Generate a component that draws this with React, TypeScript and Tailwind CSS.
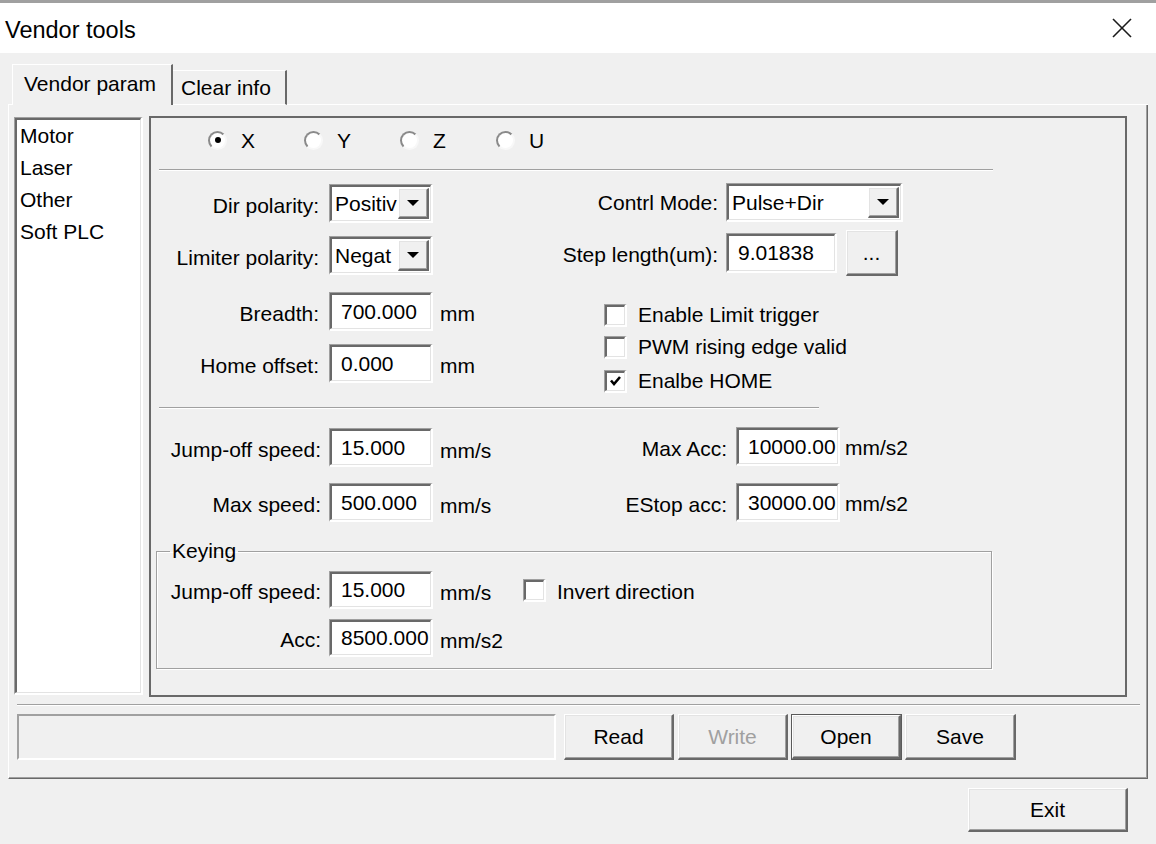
import React from "react";

const sunkenOuter =
  "border-t border-l border-b-2 border-r-2 border-t-[#a0a0a0] border-l-[#a0a0a0] border-b-white border-r-white";
const sunkenInner =
  "border-t-2 border-l-2 border-b border-r border-t-[#696969] border-l-[#696969] border-b-[#e3e3e3] border-r-[#e3e3e3]";
const raisedOuter =
  "border-t border-l border-b-2 border-r-2 border-t-white border-l-white border-b-[#696969] border-r-[#696969]";
const raisedInner =
  "border-t border-l border-b border-r border-t-[#e3e3e3] border-l-[#e3e3e3] border-b-[#a0a0a0] border-r-[#a0a0a0]";

function Edit({ value, className }: { value: string; className: string }) {
  return (
    <div className={`${sunkenOuter} ${className} shrink-0`}>
      <div className={`${sunkenInner} h-full bg-white flex items-center pl-[9px] overflow-hidden whitespace-nowrap`}>
        {value}
      </div>
    </div>
  );
}

function Arrow() {
  return (
    <svg width="12" height="6" viewBox="0 0 12 6">
      <polygon points="0,0 12,0 6,6" fill="#000" />
    </svg>
  );
}

function Combo({ value, className }: { value: string; className: string }) {
  return (
    <div className={`${sunkenOuter} ${className} shrink-0`}>
      <div className={`${sunkenInner} h-full bg-white flex items-stretch overflow-hidden`}>
        <div className="flex-1 flex items-center pl-[3px] overflow-hidden whitespace-nowrap">{value}</div>
        <div className={`${raisedOuter} w-[31px] my-[1px] mr-[1px] bg-[#f0f0f0] shrink-0`}>
          <div className={`${raisedInner} h-full flex items-center justify-center`}>
            <Arrow />
          </div>
        </div>
      </div>
    </div>
  );
}

function Button({
  label,
  className,
  disabled,
  isDefault,
}: {
  label: string;
  className: string;
  disabled?: boolean;
  isDefault?: boolean;
}) {
  const inner = (
    <div className={`${raisedOuter} h-full bg-[#f0f0f0]`}>
      <div
        className={`${raisedInner} h-full flex items-center justify-center ${
          disabled ? "text-[#a0a0a0]" : "text-black"
        }`}
      >
        {label}
      </div>
    </div>
  );
  if (isDefault) {
    return <div className={`border border-[#5a5a5a] ${className} shrink-0`}>{inner}</div>;
  }
  return <div className={`${className} shrink-0`}>{inner}</div>;
}

function Radio({ checked }: { checked?: boolean }) {
  return (
    <div className="w-[19px] h-[19px] rounded-full border-2 border-t-[#8a8a8a] border-l-[#8a8a8a] border-b-[#f8f8f8] border-r-[#f8f8f8] bg-white flex items-center justify-center shrink-0">
      {checked ? <div className="w-[6px] h-[6px] rounded-full bg-black" /> : null}
    </div>
  );
}

function Check({ checked }: { checked?: boolean }) {
  return (
    <div className={`${sunkenOuter} w-[23px] h-[23px] shrink-0`}>
      <div className={`${sunkenInner} h-full bg-white flex items-center justify-center`}>
        {checked ? (
          <svg width="13" height="12" viewBox="0 0 13 12">
            <polyline points="2,5.5 5,9 11,2" fill="none" stroke="#000" strokeWidth="2.6" />
          </svg>
        ) : null}
      </div>
    </div>
  );
}

export default function App() {
  return (
    <div className="w-[1156px] h-[844px] bg-[#f0f0f0] flex flex-col overflow-hidden font-['Liberation_Sans',Arial,sans-serif] text-[21px] leading-[24px] text-black">
      {/* top strip */}
      <div className="h-[3px] bg-[#a0a0a0] shrink-0" />
      {/* title bar */}
      <div className="h-[50px] bg-white flex items-center justify-between pl-[5px] pr-[24px] shrink-0">
        <span className="text-[23.5px] leading-[28px] pt-[3px]">Vendor tools</span>
        <svg width="20" height="20" viewBox="0 0 20 20">
          <line x1="1" y1="1" x2="19" y2="19" stroke="#1a1a1a" strokeWidth="1.6" />
          <line x1="19" y1="1" x2="1" y2="19" stroke="#1a1a1a" strokeWidth="1.6" />
        </svg>
      </div>

      <div className="flex flex-col px-[8px]">
        {/* tab strip */}
        <div className="flex items-end h-[41px] mt-[11px]">
          <div className="w-[4px] border-b border-b-white" />
          <div className="w-[161px] h-[41px] border-t border-l border-r-2 border-t-white border-l-white border-r-[#696969] pl-[11px] pt-[7px]">
            Vendor param
          </div>
          <div className="w-[114px] h-[35px] border-t border-r-2 border-b border-t-white border-r-[#696969] border-b-white pl-[8px] pt-[5px]">
            Clear info
          </div>
          <div className="flex-1 border-b border-b-white" />
        </div>

        {/* tab page */}
        <div className="border-l border-r border-b border-l-white border-r-[#696969] border-b-[#696969]">
          <div className="border-r border-b border-r-[#a0a0a0] border-b-[#a0a0a0] flex flex-col pb-[17px]">
            <div className="flex gap-[6px] pl-[5px] pt-[11px]">
              {/* list */}
              <div className={`${sunkenOuter} w-[129px] h-[578px] mt-[1px] shrink-0`}>
                <div className={`${sunkenInner} h-full bg-white flex flex-col pl-[3px]`}>
                  <div className="h-[32px] flex items-center">Motor</div>
                  <div className="h-[32px] flex items-center">Laser</div>
                  <div className="h-[32px] flex items-center">Other</div>
                  <div className="h-[32px] flex items-center">Soft PLC</div>
                </div>
              </div>

              {/* panel */}
              <div className="w-[978px] h-[581px] border-2 border-[#696969] flex flex-col shrink-0">
                {/* radios */}
                <div className="flex pl-[57px] mt-[9px]">
                  {[
                    ["X", true],
                    ["Y", false],
                    ["Z", false],
                    ["U", false],
                  ].map(([l, c]) => (
                    <div key={l as string} className="w-[96px] flex items-center gap-[14px]">
                      <Radio checked={c as boolean} />
                      <span className="pt-[2px]">{l as string}</span>
                    </div>
                  ))}
                </div>
                <div className="ml-[8px] w-[834px] h-[2px] border-t border-b border-t-[#a0a0a0] border-b-white mt-[16px]" />

                {/* upper section */}
                <div className="flex">
                  <div className="w-[389px] flex flex-col">
                    <div className="flex items-center mt-[13px]">
                      <div className="w-[168px] text-right pt-[4px]">Dir polarity:</div>
                      <Combo value="Positiv" className="w-[104px] h-[39px] ml-[10px]" />
                    </div>
                    <div className="flex items-center mt-[13px]">
                      <div className="w-[168px] text-right pt-[4px]">Limiter polarity:</div>
                      <Combo value="Negat" className="w-[104px] h-[39px] ml-[10px]" />
                    </div>
                    <div className="flex items-center mt-[17px]">
                      <div className="w-[168px] text-right pt-[4px]">Breadth:</div>
                      <Edit value="700.000" className="w-[104px] h-[39px] ml-[10px]" />
                      <span className="ml-[7px] pt-[4px]">mm</span>
                    </div>
                    <div className="flex items-center mt-[13px]">
                      <div className="w-[168px] text-right pt-[4px]">Home offset:</div>
                      <Edit value="0.000" className="w-[104px] h-[39px] ml-[10px]" />
                      <span className="ml-[7px] pt-[4px]">mm</span>
                    </div>
                  </div>
                  <div className="flex flex-col">
                    <div className="flex items-center mt-[12px]">
                      <div className="w-[178px] text-right">Contrl Mode:</div>
                      <Combo value="Pulse+Dir" className="w-[177px] h-[39px] ml-[8px]" />
                    </div>
                    <div className="flex items-center mt-[8px] h-[46px]">
                      <div className="w-[178px] text-right pt-[4px]">Step length(um):</div>
                      <Edit value="9.01838" className="w-[111px] h-[40px] ml-[8px]" />
                      <Button label="..." className="w-[52px] h-[46px] ml-[9px]" />
                    </div>
                    <div className="flex items-center pl-[64px] mt-[27px] gap-[11px]">
                      <Check />
                      <span>Enable Limit trigger</span>
                    </div>
                    <div className="flex items-center pl-[64px] mt-[8px] gap-[11px]">
                      <Check />
                      <span>PWM rising edge valid</span>
                    </div>
                    <div className="flex items-center pl-[64px] mt-[10px] gap-[11px]">
                      <Check checked />
                      <span>Enalbe HOME</span>
                    </div>
                  </div>
                </div>

                <div className="ml-[8px] w-[660px] h-[2px] border-t border-b border-t-[#a0a0a0] border-b-white mt-[14px]" />

                {/* middle section */}
                <div className="flex">
                  <div className="w-[389px] flex flex-col">
                    <div className="flex items-center mt-[19px]">
                      <div className="w-[170px] text-right pt-[4px]">Jump-off speed:</div>
                      <Edit value="15.000" className="w-[104px] h-[39px] ml-[8px]" />
                      <span className="ml-[7px] pt-[6px]">mm/s</span>
                    </div>
                    <div className="flex items-center mt-[16px]">
                      <div className="w-[170px] text-right pt-[4px]">Max speed:</div>
                      <Edit value="500.000" className="w-[104px] h-[39px] ml-[8px]" />
                      <span className="ml-[7px] pt-[6px]">mm/s</span>
                    </div>
                  </div>
                  <div className="flex flex-col">
                    <div className="flex items-center mt-[18px]">
                      <div className="w-[187px] text-right pt-[4px]">Max Acc:</div>
                      <Edit value="10000.00" className="w-[104px] h-[39px] ml-[9px]" />
                      <span className="ml-[5px] pt-[2px]">mm/s2</span>
                    </div>
                    <div className="flex items-center mt-[17px]">
                      <div className="w-[187px] text-right pt-[4px]">EStop acc:</div>
                      <Edit value="30000.00" className="w-[104px] h-[39px] ml-[9px]" />
                      <span className="ml-[5px] pt-[2px]">mm/s2</span>
                    </div>
                  </div>
                </div>

                {/* keying */}
                <fieldset className="ml-[5px] w-[836px] mt-[17px] border border-[#a0a0a0] shadow-[inset_1px_1px_0_#fff,1px_1px_0_#fff] pb-[11px]">
                  <legend className="ml-[13px] px-[2px] leading-[24px]">Keying</legend>
                  <div className="flex items-center mt-[8px]">
                    <div className="w-[164px] text-right pt-[4px]">Jump-off speed:</div>
                    <Edit value="15.000" className="w-[104px] h-[38px] ml-[8px]" />
                    <span className="ml-[7px] w-[83px] pt-[6px]">mm/s</span>
                    <Check />
                    <span className="ml-[11px] pt-[4px]">Invert direction</span>
                  </div>
                  <div className="flex items-center mt-[10px]">
                    <div className="w-[164px] text-right pt-[4px]">Acc:</div>
                    <Edit value="8500.000" className="w-[104px] h-[38px] ml-[8px]" />
                    <span className="ml-[7px] pt-[6px]">mm/s2</span>
                  </div>
                </fieldset>
              </div>
            </div>

            {/* separator */}
            <div className="ml-[8px] w-[1123px] h-[2px] border-t border-b border-t-[#a0a0a0] border-b-white mt-[7px]" />

            {/* bottom row */}
            <div className="flex ml-[8px] mt-[8px] items-center">
              <div className="w-[539px] h-[46px] border-t-2 border-l-2 border-b-2 border-r-2 border-t-[#a0a0a0] border-l-[#a0a0a0] border-b-white border-r-white" />
              <Button label="Read" className="w-[110px] h-[46px] ml-[8px]" />
              <Button label="Write" disabled className="w-[110px] h-[46px] ml-[4px]" />
              <Button label="Open" isDefault className="w-[111px] h-[46px] ml-[3px]" />
              <Button label="Save" className="w-[111px] h-[46px] ml-[3px]" />
            </div>
          </div>
        </div>

        {/* exit */}
        <div className="flex justify-end mt-[9px] pr-[20px]">
          <Button label="Exit" className="w-[160px] h-[44px]" />
        </div>
      </div>
    </div>
  );
}
